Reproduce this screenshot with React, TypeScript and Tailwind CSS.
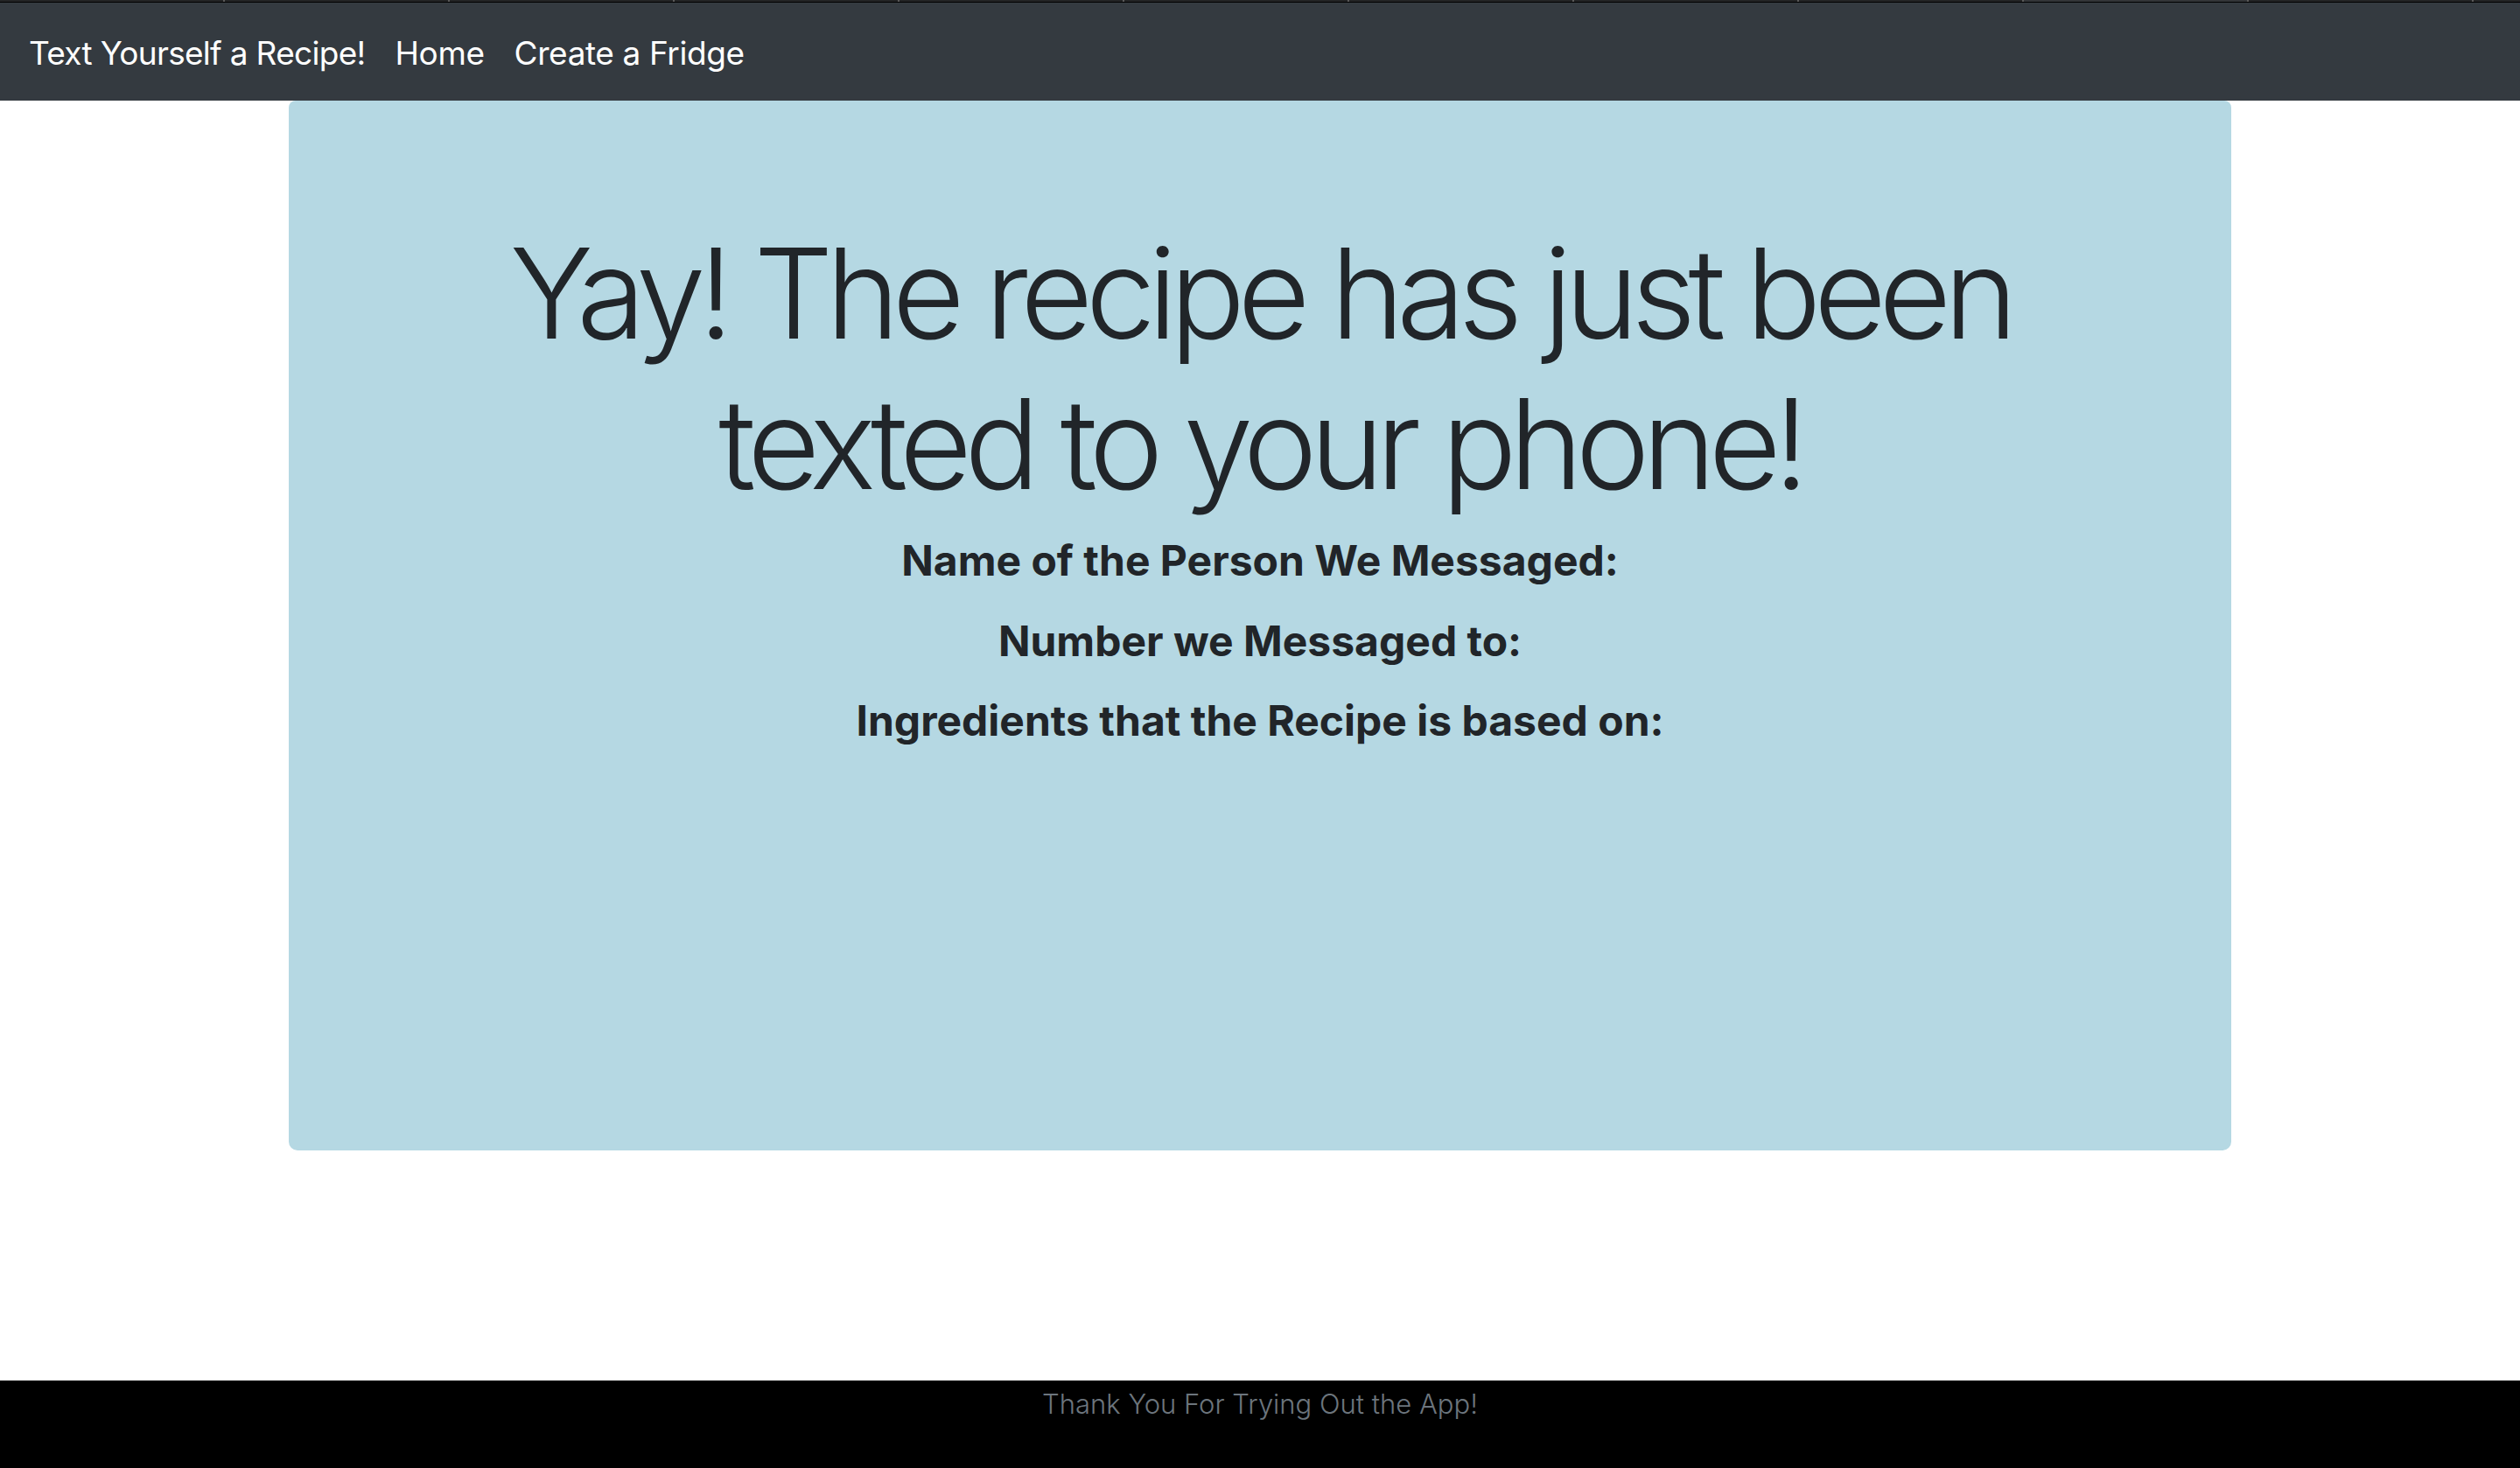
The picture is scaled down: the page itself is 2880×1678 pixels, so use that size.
import React from "react";

const tabs = Array.from({ length: 11 }, (_, i) => i);

export default function App() {
  return (
    <div className="min-h-screen flex flex-col bg-white text-[#212529] font-['Inter',sans-serif]">
      {/* browser tab strip */}
      <div className="flex h-[3px] bg-[#232425] border-b border-black">
        {tabs.map((t) => (
          <div
            key={t}
            className={
              t === 9
                ? "w-[257px] shrink-0 bg-[#333538] border-r-2 border-[#5a5a5a]"
                : "w-[257px] shrink-0 border-r-2 border-[#5a5a5a]"
            }
          ></div>
        ))}
      </div>

      <nav className="h-[112px] bg-[#343a40] flex items-center px-[33px] pt-[3px] gap-[34px] text-white text-[37px] tracking-[-0.4px]">
        <a className="leading-none tracking-[-0.7px]">Text Yourself a Recipe!</a>
        <a className="leading-none">Home</a>
        <a className="leading-none">Create a Fridge</a>
      </nav>

      <main className="flex-1">
        <div className="w-[2280px] mx-auto px-[30px]">
          <div className="h-[1200px] bg-[#b5d8e3] rounded-b-[10px] rounded-t-[8px] px-[64px] pt-[134px] text-center">
            <h1 className="text-[143px] font-light leading-[1.2] tracking-[-8.5px]">
              Yay! The recipe has just been
              <br />
              texted to your phone!
            </h1>
            <h4 className="mt-[20px] text-[48px] font-bold leading-[1.2] mb-[34px]">
              Name of the Person We Messaged:
            </h4>
            <h4 className="text-[48px] font-bold leading-[1.2] mb-[34px]">
              Number we Messaged to:
            </h4>
            <h4 className="text-[48px] font-bold leading-[1.2] mb-[34px]">
              Ingredients that the Recipe is based on:
            </h4>
          </div>
        </div>
      </main>

      <footer className="h-[100px] bg-black text-center">
        <p className="text-[31px] font-light leading-[40px] text-[#6c757d] pt-[7px]">
          Thank You For Trying Out the App!
        </p>
      </footer>
    </div>
  );
}
